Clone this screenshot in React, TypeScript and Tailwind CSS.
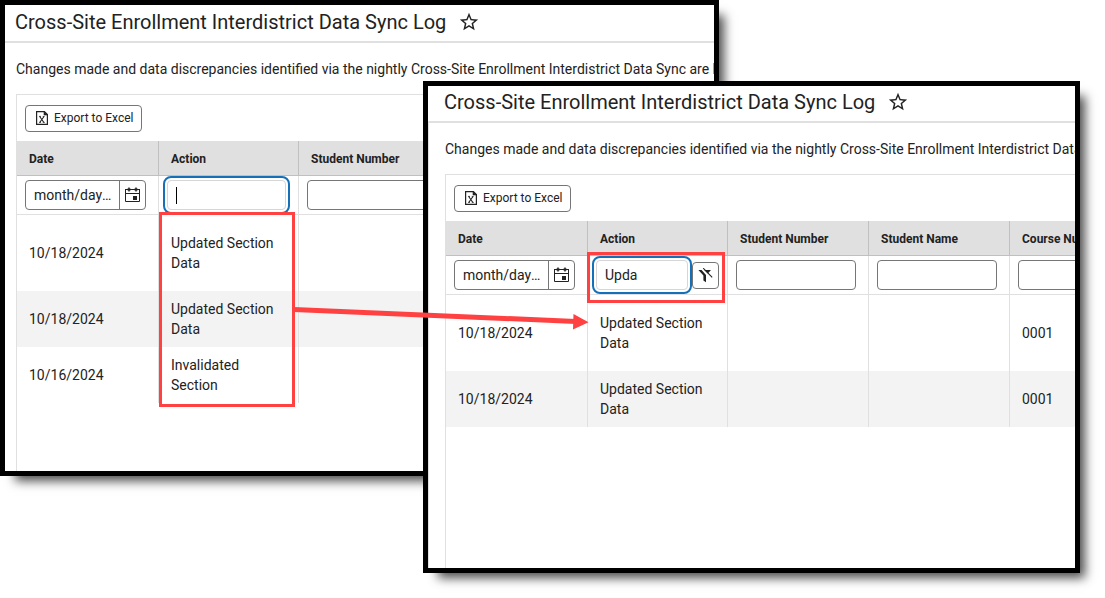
import React from "react";
import { MdStarBorder } from "react-icons/md";

type Row = { date: string; action: string; course: string };

type LogWindowProps = {
  rows: Row[];
  columns: string[];
  actionFilter: string;
  className: string;
  headerClass: string;
  bodyClass: string;
};

function ExcelIcon() {
  return (
    <svg width="12" height="14" viewBox="0 0 12 14" fill="none" stroke="#222" aria-hidden="true">
      <path d="M0.6 0.6H8.4L11.4 3.6V13.4H0.6Z" strokeWidth="1.2" />
      <path d="M8 0.6V4H11.4Z" fill="#222" strokeWidth="0.6" />
      <path d="M3.7 5.5L7.7 11.3M8 5.5L3.9 11.3" strokeWidth="1.1" />
      <path d="M3 5.4H5M6.8 5.4H8.6M3 11.4H5M6.8 11.4H8.8" strokeWidth="0.8" />
    </svg>
  );
}

function CalendarIcon() {
  return (
    <svg width="15" height="16" viewBox="0 0 15 16" fill="none" stroke="#222" aria-hidden="true">
      <path d="M0.5 2V14.5H14.5V2" strokeWidth="1" />
      <path d="M0.5 6.5H14.5" strokeWidth="1" />
      <path d="M0 2.5H15" strokeWidth="1" />
      <path d="M4 0.5V4.5M11 0.5V4.5" strokeWidth="1.4" />
      <path d="M2.5 2.5H5.5M9.5 2.5H12.5" strokeWidth="1.8" />
      <path d="M8 9H12V13H8Z" fill="#222" stroke="none" />
    </svg>
  );
}

function FilterOffIcon() {
  return (
    <svg width="15" height="15" viewBox="0 0 15 15" aria-hidden="true">
      <path d="M0.4 2H3.6L8 7V14.2L5.4 12.4V7.6Z" fill="#222" />
      <path d="M6.2 2H13L9.8 5.6Z" fill="#222" />
      <path d="M5.2 0.2L14.2 9.4" stroke="#222" strokeWidth="1.1" />
    </svg>
  );
}

const headCell = "h-[35px] border-r border-b border-[#c0c0c0] px-3 pt-0.5 text-left text-xs font-bold";
const filterCell = "h-[39px] border-r border-b border-[#e0e0e0] pl-2 pr-3";
const bodyCell = "border-r border-[#e0e0e0] px-3 align-middle";
const textBox = "block h-[30px] w-full min-w-0 rounded-[4px] border border-[#767676] bg-white px-2 text-sm";

const columnWidths: Record<string, string> = {
  Date: "w-[142px]",
  Action: "w-[140px]",
};

function LogWindow({ rows, columns, actionFilter, className, headerClass, bodyClass }: LogWindowProps) {
  return (
    <section
      className={`absolute flex flex-col overflow-hidden border-[5px] border-black bg-white shadow-[10px_10px_10px_-5px_rgba(0,0,0,0.7)] ${className}`}
    >
      <header className={`flex shrink-0 items-end gap-3 border-b-2 border-[#e0e0e0] pb-[5px] ${headerClass}`}>
        <h1 className="text-xl leading-7 whitespace-nowrap">Cross-Site Enrollment Interdistrict Data Sync Log</h1>
        <button type="button" aria-label="Favorite" className="flex h-7 items-center">
          <MdStarBorder size={22} />
        </button>
      </header>
      <div className={`flex grow flex-col pt-4 ${bodyClass}`}>
        <p className="text-sm leading-5 whitespace-nowrap">
          Changes made and data discrepancies identified via the nightly Cross-Site Enrollment Interdistrict Data Sync
          are listed
        </p>
        <div className="mt-[15px] grow border-t border-l border-[#e0e0e0]">
          <div className="px-2 pt-2.5 pb-[9px]">
            <button
              type="button"
              className="flex h-[27px] items-center gap-1.5 rounded-[4px] border border-[#767676] pr-2 pb-px pl-2.5 text-xs"
            >
              <ExcelIcon />
              Export to Excel
            </button>
          </div>
          <table className="w-px table-fixed border-separate border-spacing-0">
            <colgroup>
              {columns.map((name) => (
                <col key={name} className={columnWidths[name] ?? "w-[141px]"} />
              ))}
            </colgroup>
            <thead className="bg-[#e0e0e0]">
              <tr>
                {columns.map((name) => (
                  <th key={name} scope="col" className={`${headCell} whitespace-nowrap`}>
                    {name}
                  </th>
                ))}
              </tr>
            </thead>
            <tbody>
              <tr>
                <td className={filterCell}>
                  <div className="flex h-[30px] w-[121px] rounded-[4px] border border-[#767676]">
                    <input
                      aria-label="Filter by date"
                      placeholder="month/day/year"
                      className="w-[93px] min-w-0 pr-1.5 pl-2 text-sm text-ellipsis placeholder:text-[#222]"
                    />
                    <button
                      type="button"
                      aria-label="Open calendar"
                      className="flex flex-1 items-center justify-center border-l border-[#767676]"
                    >
                      <CalendarIcon />
                    </button>
                  </div>
                </td>
                <td className={filterCell}>
                  <div className={`relative flex gap-1 ${actionFilter ? "-mr-1" : ""}`}>
                    <input
                      aria-label="Filter by action"
                      defaultValue={actionFilter}
                      className="block h-[30px] w-full min-w-0 rounded-[4px] border border-[#d6d6d6] px-2 text-sm outline-2 outline-offset-2 outline-[#1470b8]"
                    />
                    {actionFilter ? (
                      <button
                        type="button"
                        aria-label="Clear action filter"
                        className="flex h-[27px] w-[27px] shrink-0 items-center justify-center self-center rounded-[4px] border border-[#767676]"
                      >
                        <FilterOffIcon />
                      </button>
                    ) : (
                      <span className="absolute top-[7px] left-[9px] h-[17px] w-px bg-black" />
                    )}
                  </div>
                </td>
                {columns.slice(2).map((name) => (
                  <td key={name} className={filterCell}>
                    <input aria-label={`Filter by ${name}`} className={textBox} />
                  </td>
                ))}
              </tr>
              {rows.map((row, i) => (
                <tr key={i} className={`text-sm leading-5 ${i === 0 ? "h-[76px]" : "h-14"} ${i === 1 ? "bg-[#f3f3f3]" : ""}`}>
                  <td className={bodyCell}>{row.date}</td>
                  <td className={bodyCell}>{row.action}</td>
                  {columns.slice(2).map((name) => (
                    <td key={name} className={bodyCell}>
                      {name === "Course Number" ? row.course : null}
                    </td>
                  ))}
                </tr>
              ))}
            </tbody>
          </table>
        </div>
      </div>
    </section>
  );
}

const allRows: Row[] = [
  { date: "10/18/2024", action: "Updated Section Data", course: "0001" },
  { date: "10/18/2024", action: "Updated Section Data", course: "0001" },
  { date: "10/16/2024", action: "Invalidated Section", course: "0001" },
];

export default function App() {
  return (
    <main className="relative min-h-screen overflow-hidden bg-white font-[Roboto,sans-serif] text-[#222]">
      <LogWindow
        rows={allRows}
        columns={["Date", "Action", "Student Number"]}
        actionFilter=""
        className="top-0 right-[386px] left-0 min-h-[476px]"
        headerClass="h-[38px] pl-2.5"
        bodyClass="pl-[11px]"
      />
      <LogWindow
        rows={allRows.slice(0, 2)}
        columns={["Date", "Action", "Student Number", "Student Name", "Course Number"]}
        actionFilter="Upda"
        className="top-[81px] right-[25px] left-[423px] min-h-[492px]"
        headerClass="h-[37px] pl-4"
        bodyClass="border-l border-[#e0e0e0] pl-4"
      />
      <div className="absolute top-[212px] left-[159px] h-[195px] w-[136px] border-[3px] border-[#ff4141]" />
      <div className="absolute top-[252px] left-[587px] h-[51px] w-[138px] border-[3px] border-[#ff4141]" />
      <svg className="absolute top-[300px] left-[292px]" width="300" height="40" viewBox="0 0 300 40" aria-hidden="true">
        <path d="M2 9.5L284 21.5" stroke="#ff4141" strokeWidth="5" />
        <path d="M281.5 14L296.5 22.3L281 29.5Z" fill="#ff4141" />
      </svg>
    </main>
  );
}
